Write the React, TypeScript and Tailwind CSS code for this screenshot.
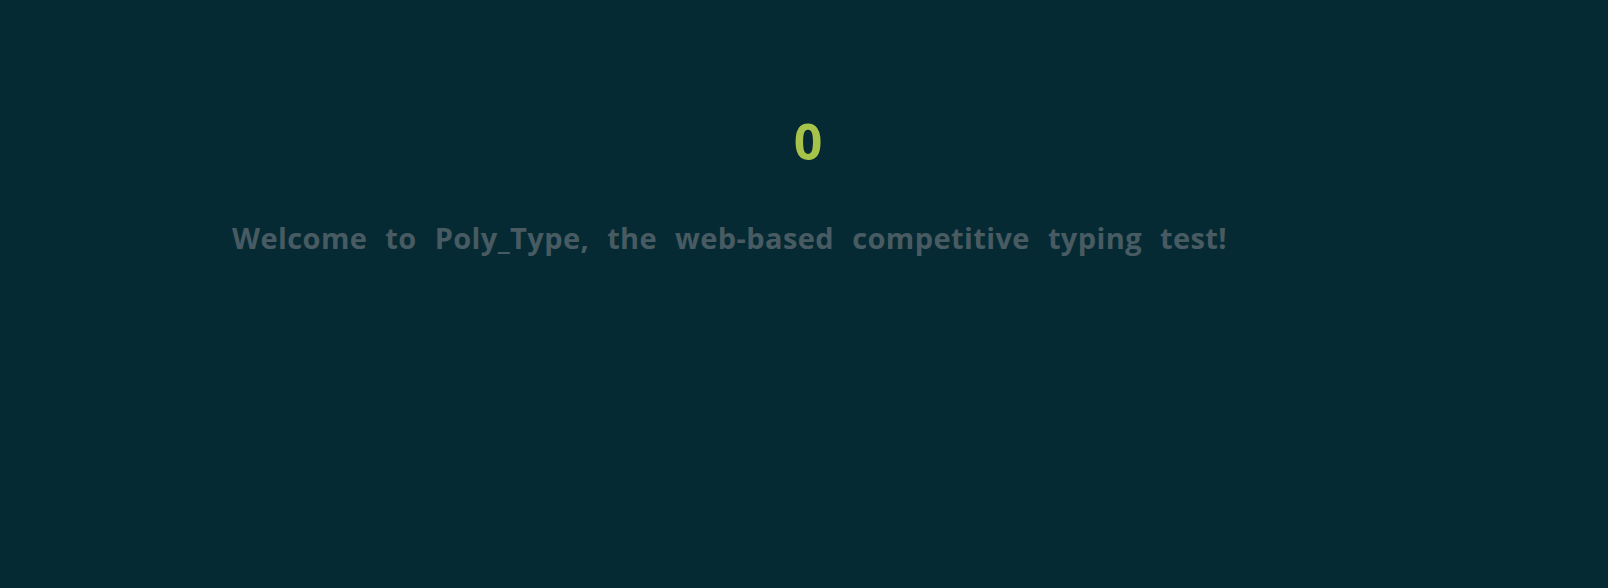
import React from "react";

const words = "Welcome to Poly_Type, the web-based competitive typing test!".split(" ");

export default function App() {
  return (
    <div className="min-h-[588px] w-full bg-[#062a33] flex flex-col items-center">
      <div className="w-[1144px] pt-[113px] flex flex-col">
        <div className="text-center text-[#a6c34a] text-[50px] leading-[56px] font-bold [font-family:'Trebuchet_MS','Open_Sans',sans-serif] pl-[8px]">
          0
        </div>
        <div className="mt-[49px] flex flex-wrap gap-x-[18px] text-[#485b62] text-[29px] leading-[40px] tracking-[0.4px] font-bold [font-family:'Trebuchet_MS','Open_Sans',sans-serif]">
          {words.map((w, i) => (
            <span key={i}>{w}</span>
          ))}
        </div>
      </div>
    </div>
  );
}
